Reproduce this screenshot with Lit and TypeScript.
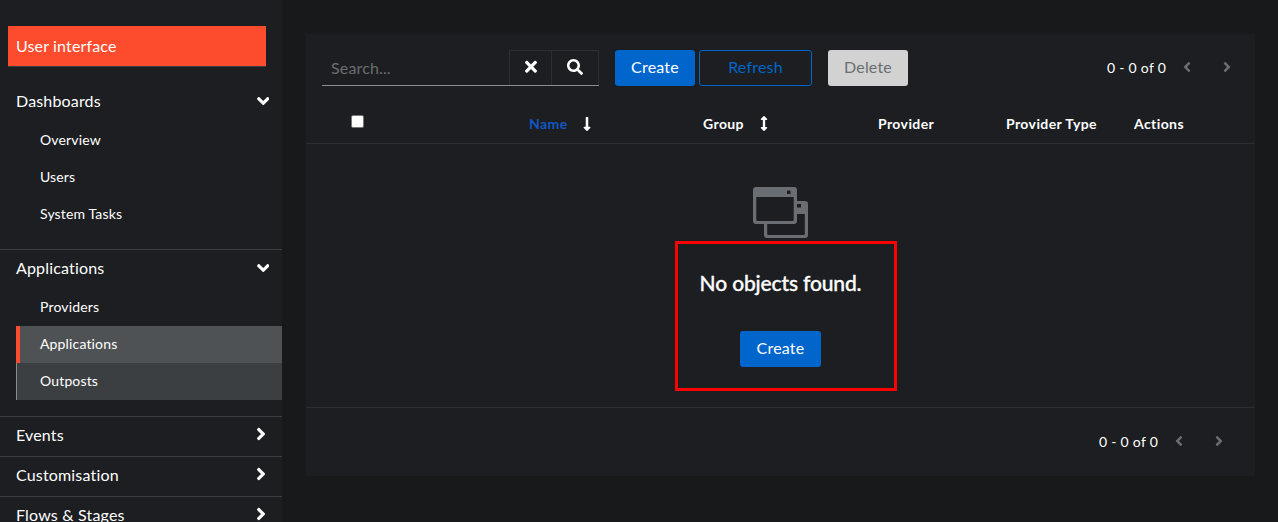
import { LitElement, html, css, svg } from "lit";
import { customElement, property } from "lit/decorators.js";

const ICONS: Record<string, { box: string; d: string }> = {
  down: { box: "0 0 320 512", d: "M143 352.3L7 216.3c-9.4-9.4-9.4-24.6 0-33.9l22.6-22.6c9.4-9.4 24.6-9.4 33.9 0l96.4 96.4 96.4-96.4c9.4-9.4 24.6-9.4 33.9 0l22.6 22.6c9.4 9.4 9.4 24.6 0 33.9l-136 136c-9.2 9.4-24.4 9.4-33.8 0z" },
  right: { box: "0 0 256 512", d: "M224.3 273l-136 136c-9.4 9.4-24.6 9.4-33.9 0l-22.6-22.6c-9.4-9.4-9.4-24.6 0-33.9l96.4-96.4-96.4-96.4c-9.4-9.4-9.4-24.6 0-33.9L54.3 103c9.4-9.4 24.6-9.4 33.9 0l136 136c9.5 9.4 9.5 24.6.1 34z" },
  left: { box: "0 0 256 512", d: "M31.7 239l136-136c9.4-9.4 24.6-9.4 33.9 0l22.6 22.6c9.4 9.4 9.4 24.6 0 33.9L127.9 256l96.4 96.4c9.4 9.4 9.4 24.6 0 33.9L201.7 409c-9.4 9.4-24.6 9.4-33.9 0l-136-136c-9.5-9.4-9.5-24.6-.1-34z" },
  times: { box: "0 0 352 512", d: "M242.72 256l100.07-100.07c12.28-12.28 12.28-32.19 0-44.48l-22.24-22.24c-12.28-12.28-32.19-12.28-44.48 0L176 189.28 75.93 89.21c-12.28-12.28-32.19-12.28-44.48 0L9.21 111.45c-12.28 12.28-12.28 32.19 0 44.48L109.28 256 9.21 356.07c-12.28 12.28-12.28 32.19 0 44.48l22.24 22.24c12.28 12.28 32.2 12.28 44.48 0L176 322.72l100.07 100.07c12.28 12.28 32.2 12.28 44.48 0l22.24-22.24c12.28-12.28 12.28-32.19 0-44.48L242.72 256z" },
  search: { box: "0 0 512 512", d: "M505 442.7L405.3 343c-4.5-4.5-10.6-7-17-7H372c27.6-35.3 44-79.7 44-128C416 93.1 322.9 0 208 0S0 93.1 0 208s93.1 208 208 208c48.3 0 92.7-16.4 128-44v16.3c0 6.4 2.5 12.5 7 17l99.7 99.7c9.4 9.4 24.6 9.4 33.9 0l28.3-28.3c9.4-9.4 9.4-24.6.1-34zM208 336c-70.7 0-128-57.2-128-128 0-70.7 57.2-128 128-128 70.7 0 128 57.2 128 128 0 70.7-57.2 128-128 128z" },
  sorted: { box: "0 0 256 512", d: "M168 345.941V44c0-6.627-5.373-12-12-12h-56c-6.627 0-12 5.373-12 12v301.941H41.941c-21.382 0-32.09 25.851-16.971 40.971l86.059 86.059c9.373 9.373 24.569 9.373 33.941 0l86.059-86.059c15.119-15.119 4.411-40.971-16.971-40.971H168z" },
  sortable: { box: "0 0 256 512", d: "M214.059 377.941H168V134.059h46.059c21.382 0 32.09-25.851 16.971-40.971L144.971 7.029c-9.373-9.373-24.568-9.373-33.941 0L24.971 93.088c-15.119 15.119-4.411 40.971 16.971 40.971H88v243.882H41.941c-21.382 0-32.09 25.851-16.971 40.971l86.059 86.059c9.373 9.373 24.568 9.373 33.941 0l86.059-86.059c15.12-15.119 4.412-40.971-16.97-40.971z" },
  windows: { box: "0 0 55 51", d: "M3 0H41a3 3 0 0 1 3 3V14H52a3 3 0 0 1 3 3V48a3 3 0 0 1-3 3H14a3 3 0 0 1-3-3V37H3a3 3 0 0 1-3-3V3a3 3 0 0 1 3-3ZM3.3 10V33a1 1 0 0 0 1 1H39.700a1 1 0 0 0 1-1V10ZM34 3.500V7H37.500V3.500ZM44 17V20.500H48V17ZM44 27V34a3 3 0 0 1-3 3H14.200V47a1 1 0 0 0 1 1H50.800a1 1 0 0 0 1-1V27Z" },
};

@customElement("ui-icon")
export class UiIcon extends LitElement {
  static styles = css`
    :host { display: inline-flex; flex: none; }
    svg { display: block; height: 100%; width: 100%; fill: currentColor; }
  `;
  @property() name = "right";
  render() {
    const icon = ICONS[this.name];
    return html`<svg viewBox=${icon.box} aria-hidden="true">${svg`<path fill-rule="evenodd" d=${icon.d}></path>`}</svg>`;
  }
}

interface Section {
  label: string;
  items?: string[];
}

const SECTIONS: Section[] = [
  { label: "Dashboards", items: ["Overview", "Users", "System Tasks"] },
  { label: "Applications", items: ["Providers", "Applications", "Outposts"] },
  { label: "Events" },
  { label: "Customisation" },
  { label: "Flows & Stages" },
];

@customElement("app-sidebar")
export class AppSidebar extends LitElement {
  static styles = css`
    :host { display: block; width: 282px; flex: none; background: #1c1e21; color: #fff; overflow: hidden; }
    .brand { margin: 26px 16px 16px 8px; padding-left: 8px; height: 41px; line-height: 39px; box-sizing: border-box; background: #fd4b2d; border-bottom: 1px solid #3c3f42; letter-spacing: 0.15px; }
    .section { border-bottom: 1px solid #3c3f42; }
    .head { display: flex; align-items: flex-start; justify-content: space-between; height: 39px; padding: 0 13px 0 16px; line-height: 36px; letter-spacing: 0.17px; }
    .chev-down { width: 12.500px; height: 20px; margin-top: 8px; }
    .chev-right { width: 10px; height: 20px; margin: 7px 3px 0 0; }
    .items { padding: 0 0 16px 16px; font-size: 14px; letter-spacing: 0.15px; }
    .item { height: 37px; line-height: 36px; padding-left: 24px; }
    .current { background: #4f5255; border-left: 4px solid #fd4b2d; padding-left: 20px; }
    .hover { background: #3c3f42; border-left: 1px solid #8a8d90; padding-left: 23px; }
  `;
  render() {
    return html`
      <div class="brand">User interface</div>
      ${SECTIONS.map(
        (s) => html`<div class="section">
          <div class="head">
            <span>${s.label}</span>
            <ui-icon class=${s.items ? "chev-down" : "chev-right"} name=${s.items ? "down" : "right"}></ui-icon>
          </div>
          ${s.items
            ? html`<div class="items">
                ${s.items.map((i) => html`<div class="item ${i === "Applications" ? "current" : i === "Outposts" ? "hover" : ""}">${i}</div>`)}
              </div>`
            : null}
        </div>`
      )}
    `;
  }
}

@customElement("app-pagination")
export class AppPagination extends LitElement {
  static styles = css`
    :host { display: flex; align-items: center; font-size: 14px; color: #fff; }
    .count { width: 62px; white-space: nowrap; letter-spacing: 0.28px; padding-bottom: 2px; }
    .prev, .next { width: 8px; height: 16px; color: #6a6e73; margin-bottom: 2px; }
    .prev { margin-left: 14px; }
    .next { margin-left: 32px; }
  `;
  render() {
    return html`<span class="count">0 - 0 of 0</span><ui-icon class="prev" name="left"></ui-icon><ui-icon class="next" name="right"></ui-icon>`;
  }
}

@customElement("app-root")
export class AppRoot extends LitElement {
  static styles = css`
    :host { display: flex; box-sizing: border-box; height: 522px; overflow: hidden; background: #18191a; color: #fff; font-family: Lato, "Liberation Sans", sans-serif; font-size: 16px; }
    * { box-sizing: border-box; }
    main { flex: 1; padding: 34px 23px 0 24px; }
    .card { height: 442px; background: #1c1e21; }
    .toolbar { display: flex; align-items: center; height: 72px; padding: 2px 24px 6px 16px; }
    .search { display: flex; width: 277px; height: 36px; border-bottom: 1px solid #8a8d90; }
    .field { flex: 1; padding-left: 9px; line-height: 36px; color: #6a6e73; letter-spacing: 0.15px; }
    .tool { display: flex; align-items: center; justify-content: center; border: 1px solid #2b2e33; border-bottom: 0; }
    .clear { width: 42px; border-right: 0; }
    .find { width: 48px; }
    .times { width: 12px; height: 17.500px; margin-bottom: 2px; }
    .glass { width: 16px; height: 16px; margin-bottom: 2px; }
    .btn { height: 36px; width: 80px; border-radius: 3px; text-align: center; line-height: 34px; color: #fff; background: #06c; letter-spacing: 0.2px; }
    .create { margin-left: 16px; }
    .refresh { width: 113px; margin-left: 4px; background: none; border: 1px solid #06c; color: #06c; line-height: 32px; }
    .delete { margin-left: 16px; background: #d2d2d2; color: #6a6e73; }
    .pager { margin-left: auto; }
    .thead { display: grid; grid-template-columns: 223px 174px 175px 128px 128px 1fr; height: 38px; border-bottom: 1px solid #2b2e33; font-size: 14px; font-weight: 700; letter-spacing: 0.4px; }
    .cell { display: flex; align-items: center; height: 35px; }
    .sorted { color: #1058c4; }
    .check { width: 13px; height: 13px; margin: 0 0 5px 45px; border: 1px solid #767676; border-radius: 2px; background: #fff; }
    .sort { width: 8px; height: 16px; margin-left: 15px; color: #fff; }
    .sort-both { width: 8px; height: 15px; margin-left: 16px; color: #fff; }
    .empty { display: flex; flex-direction: column; align-items: center; position: relative; height: 264px; padding-top: 43px; border-bottom: 1px solid #2b2e33; }
    .art { width: 55px; height: 51px; color: #6a6e73; }
    .title { margin: 30px 0 0; font-size: 21px; line-height: 30px; font-weight: 500; letter-spacing: -0.15px; white-space: nowrap; -webkit-text-stroke: 0.3px #fff; }
    .empty .btn { width: 81px; margin-top: 33px; }
    .frame { position: absolute; left: 369px; top: 97px; width: 222px; height: 150px; border: 3px solid #f00; }
    .foot { display: flex; justify-content: flex-end; height: 68px; padding-right: 32px; }
  `;
  render() {
    return html`
      <app-sidebar></app-sidebar>
      <main>
        <section class="card">
          <div class="toolbar">
            <div class="search">
              <div class="field">Search...</div>
              <div class="tool clear"><ui-icon class="times" name="times"></ui-icon></div>
              <div class="tool find"><ui-icon class="glass" name="search"></ui-icon></div>
            </div>
            <div class="btn create">Create</div>
            <div class="btn refresh">Refresh</div>
            <div class="btn delete">Delete</div>
            <app-pagination class="pager"></app-pagination>
          </div>
          <div class="thead">
            <div class="cell"><span class="check"></span></div>
            <div class="cell sorted">Name<ui-icon class="sort" name="sorted"></ui-icon></div>
            <div class="cell">Group<ui-icon class="sort-both" name="sortable"></ui-icon></div>
            <div class="cell">Provider</div>
            <div class="cell">Provider Type</div>
            <div class="cell">Actions</div>
          </div>
          <div class="empty">
            <ui-icon class="art" name="windows"></ui-icon>
            <h1 class="title">No objects found.</h1>
            <div class="btn">Create</div>
            <div class="frame"></div>
          </div>
          <div class="foot"><app-pagination></app-pagination></div>
        </section>
      </main>
    `;
  }
}
